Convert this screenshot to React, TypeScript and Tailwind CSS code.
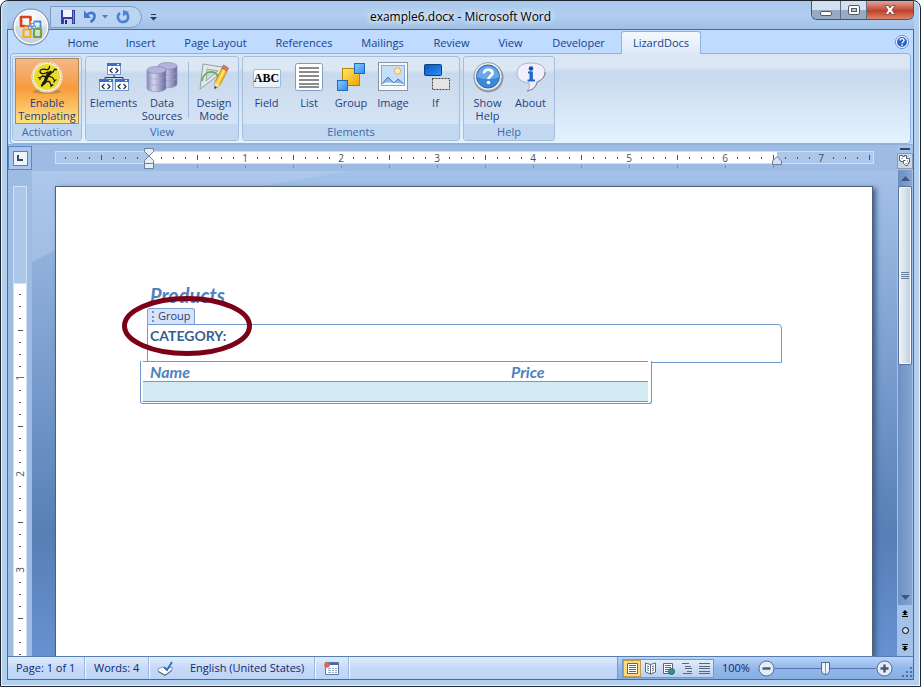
import type { ReactNode } from "react";
import clsx from "clsx";

const TABS = [
  { name: "Home", width: "w-[58px]" },
  { name: "Insert", width: "w-[57px]" },
  { name: "Page Layout", width: "w-[93px]" },
  { name: "References", width: "w-[84px]" },
  { name: "Mailings", width: "w-[73px]" },
  { name: "Review", width: "w-[65px]" },
  { name: "View", width: "w-[53px]" },
  { name: "Developer", width: "w-[83px]" },
];

const range = (from: number, to: number) =>
  Array.from({ length: to - from + 1 }, (_, i) => from + i);

/* ---------- icons ---------- */

const OfficeLogo = () => (
  <svg viewBox="0 0 38 38" className="size-[38px]">
    <defs>
      <radialGradient id="orb" cx="50%" cy="30%" r="70%">
        <stop offset="0" stopColor="#ffffff" />
        <stop offset="0.6" stopColor="#e3e8f0" />
        <stop offset="1" stopColor="#b4bfd0" />
      </radialGradient>
    </defs>
    <circle cx="19" cy="19" r="18" fill="url(#orb)" stroke="#7585a0" />
    <path d="M2.500 19a16.500 16.500 0 0 0 33 0c-8-3-25-3-33 0Z" fill="#c9d1de" opacity=".55" />
    <circle cx="19" cy="19" r="16.500" fill="none" stroke="#fff" strokeWidth="1.200" />
    <g fill="none" strokeLinejoin="round">
      <path d="M13 18H9V9h9.500v4" stroke="#d8421c" strokeWidth="2.600" />
      <path d="M12.500 18H18v-5" stroke="#ee7c1c" strokeWidth="2.200" />
      <path d="M22 13.500h6.500v6.500" stroke="#3f8bd8" strokeWidth="1.800" />
      <path d="M22 13v3.500M25 20h3.500" stroke="#6aaee9" strokeWidth="1.800" />
      <path d="M18.500 21.500h-7v7.500h7z" stroke="#f4ac1c" strokeWidth="2.200" />
      <path d="M22 21h7v8h-7z" stroke="#6ba83a" strokeWidth="2.200" />
      <path d="M19 15.500h3v3h-3zM16.500 18.500h3v3h-3zM20.500 18h3v3h-3z" stroke="#5d9be0" />
    </g>
  </svg>
);

const LizardIcon = () => (
  <svg viewBox="0 0 32 32" className="size-8">
    <ellipse cx="16" cy="29.500" rx="14" ry="2.500" fill="#a88346" opacity=".7" />
    <circle cx="16" cy="15" r="15.500" fill="#fbf5dc" />
    <circle cx="16" cy="15" r="14.500" fill="none" stroke="#b9ab74" strokeWidth=".8" strokeDasharray="2 1" />
    <circle cx="16" cy="15" r="13" fill="#e9dc2c" />
    <g fill="none" stroke="#1c1a08" strokeLinecap="round" strokeLinejoin="round">
      <path d="M17 10c-3 2.500-8 2-8-.5S13 7 15 7.500c2.500.5 3.500-1 3.500-3" strokeWidth="1.300" />
      <path d="M19.500 10.500c-2.500 2-4 4-4.500 6.500s-1 3-2 4" strokeWidth="3.200" />
      <path d="M12.500 21l-1.500 2.500" strokeWidth="2.400" />
      <path d="M19.500 10.500l2.500-.5 1.500-2.500M23.500 7.500l2 0" strokeWidth="1.300" />
      <path d="M17.500 14l4 1.500 2 3M23.500 18.500l1.500-.5M23.500 18.500l-.5 1.500" strokeWidth="1.300" />
      <path d="M15.500 15l-4-1-2.500 2M9 16l-1.500-.5M9 16l0 1.500" strokeWidth="1.300" />
      <path d="M14.500 19.500l4 0 1.500 3.500M20 23l2 0M20 23l0 1.500" strokeWidth="1.300" />
    </g>
  </svg>
);

const ElementsIcon = () => (
  <svg viewBox="0 0 32 32" className="size-8">
    <path d="M16 13v3M7 18v-2.500h18V18" fill="none" stroke="#1d3767" />
    {[
      [9, 1],
      [1, 17],
      [17, 17],
    ].map(([x, y]) => (
      <g key={`${x}-${y}`} transform={`translate(${x} ${y})`}>
        <rect x=".5" y=".5" width="13" height="11" fill="#fff" stroke="#7793c4" />
        <path d="M0 0h14v3H0z" fill="#3a6fcb" />
        <path d="M10 1h2v1h-2z" fill="#fff" />
        <path d="M5.500 5 3 7.500 5.500 10M8.500 5 11 7.500 8.500 10" fill="none" stroke="#15305f" strokeWidth="1.200" />
      </g>
    ))}
  </svg>
);

const DataIcon = () => (
  <svg viewBox="0 0 32 32" className="size-8">
    <defs>
      <linearGradient id="drum">
        <stop offset="0" stopColor="#8587b7" />
        <stop offset=".35" stopColor="#d4d4ef" />
        <stop offset="1" stopColor="#66689f" />
      </linearGradient>
    </defs>
    {[
      [12, 0],
      [1, 4],
    ].map(([x, y]) => (
      <g key={x} transform={`translate(${x} ${y})`}>
        <path d="M0 4v18c0 5 19 5 19 0V4" fill="url(#drum)" stroke="#8c8dba" strokeWidth=".6" />
        <ellipse cx="9.500" cy="4" rx="9.500" ry="3.500" fill="#b3b3db" stroke="#8183b3" strokeWidth=".6" />
        <path d="M0 10c1 4 18 4 19 0M0 16c1 4 18 4 19 0" fill="none" stroke="#9a9bc8" strokeWidth=".6" />
      </g>
    ))}
  </svg>
);

const DesignIcon = () => (
  <svg viewBox="0 0 32 32" className="size-8">
    <path d="M5 2 30 6 2 27Z" fill="#e4e8e6" stroke="#7f8a92" strokeWidth=".8" />
    <path d="M9 7 20 9 8 19Z" fill="#c8d6e3" stroke="#8e989f" strokeWidth=".8" />
    <path d="M4 19C6 8 17 7 21 16" fill="none" stroke="#58ad45" strokeWidth="1.600" />
    <path d="m17 20 7-14 5 3-7 14-5 4z" fill="#f9c32c" stroke="#b27c16" strokeWidth=".8" />
    <path d="m19.500 21.500 7-14" stroke="#ffec93" strokeWidth="1.500" />
    <path d="m24 6 1.500-3 5 3-1.500 3z" fill="#df7767" stroke="#a94e48" strokeWidth=".6" />
    <path d="m17 20 5 3-5.500 4z" fill="#f4dcb2" />
    <path d="m16.500 24 2.500 1.300-2.500 1.700z" fill="#343434" />
  </svg>
);

const FieldIcon = () => (
  <span className="flex h-8 w-8 items-center justify-center">
    <span className="flex h-[19px] w-7 shrink-0 items-center justify-center rounded-xs border border-[#a5b8d6] bg-linear-to-b from-white to-[#e6eefa] font-['Liberation_Serif',serif] text-xs font-bold text-black">
      ABC
    </span>
  </span>
);

const ListIcon = () => (
  <svg viewBox="0 0 32 32" className="size-8">
    <rect x="2.500" y="1.500" width="27" height="27" rx="2" fill="#fff" stroke="#7f9cc8" />
    <path d="M6 6h20M6 10h20M6 14h20M6 18h20M6 22h20M6 25h20" stroke="#8b8b8b" strokeWidth="2" />
  </svg>
);

const GroupIcon = () => (
  <svg viewBox="0 0 32 32" className="size-8">
    <defs>
      <linearGradient id="gold" x2="1" y2="1">
        <stop offset="0" stopColor="#ffe869" />
        <stop offset="1" stopColor="#eda500" />
      </linearGradient>
      <linearGradient id="azure" x2="1" y2="1">
        <stop offset="0" stopColor="#8ccbff" />
        <stop offset="1" stopColor="#2d8df0" />
      </linearGradient>
    </defs>
    <rect x="7.500" y="6.500" width="17" height="17" fill="url(#gold)" stroke="#b58305" />
    <rect x="19.500" y="1.500" width="10" height="10" fill="url(#azure)" stroke="#1f69bd" />
    <rect x="2.500" y="18.500" width="10" height="10" fill="url(#azure)" stroke="#1f69bd" />
  </svg>
);

const ImageIcon = () => (
  <svg viewBox="0 0 32 32" className="size-8">
    <rect x="1.500" y=".5" width="29" height="28" fill="#f7f9fb" stroke="#8796ab" />
    <rect x="4.500" y="3.500" width="23" height="20" fill="#c3e0fa" stroke="#84a9d4" />
    <circle cx="20.500" cy="9" r="3.200" fill="#ffe9ba" stroke="#f0ae59" />
    <path d="m5 22 6-7 5 5 3 3H5zM15 23l6-6 6 6z" fill="#8db6e8" />
    <path d="m5 22 6-7 6 6M16 22l5-5 6 5" fill="none" stroke="#4b76b8" />
    <path d="M5 22c5-3 14-1 22 0v1H5z" fill="#eef6ff" />
  </svg>
);

const IfIcon = () => (
  <svg viewBox="0 0 32 32" className="size-8">
    <defs>
      <linearGradient id="deep" x2="1" y2="1">
        <stop offset="0" stopColor="#0a55bf" />
        <stop offset="1" stopColor="#2b93f5" />
      </linearGradient>
    </defs>
    <rect x="4.500" y="2.500" width="17" height="11" rx="1" fill="url(#deep)" stroke="#103e83" />
    <rect x="12.500" y="16.500" width="17" height="11" fill="#e4e4e4" stroke="#444" strokeDasharray="2 1" />
  </svg>
);

const HelpIcon = () => (
  <svg viewBox="0 0 32 32" className="size-8">
    <circle cx="16.500" cy="15.500" r="15" fill="#8f98a3" />
    <circle cx="16" cy="14.500" r="14" fill="#e9edf1" stroke="#8a97a6" strokeWidth=".8" />
    <circle cx="16" cy="14.500" r="11.500" fill="#3c86d9" stroke="#366aab" />
    <path d="M5 15a11 11 0 0 1 22 0c-7 3-15 3-22 0Z" fill="#68a6e8" />
    <path d="M12 11.500c0-5 8.500-5 8.500-.5 0 3-4 3-4 6" fill="none" stroke="#fff" strokeWidth="2.800" />
    <circle cx="16.500" cy="20.500" r="1.800" fill="#fff" />
  </svg>
);

const AboutIcon = () => (
  <svg viewBox="0 0 32 32" className="size-8">
    <path d="M16 1C7 1 2 5 2 11c0 6 4 9 12 10 1 4 0 6-2 8 6-1 9-4 10-9 5-2 8-5 8-10C30 4 24 1 16 1Z" fill="#f2effd" stroke="#b0aed0" />
    <path d="M22 20c5-2 8-5 8-10M12 29c6-1 9-4 10-9" fill="none" stroke="#7f7d9e" />
    <circle cx="16" cy="6.500" r="2.300" fill="#174fae" />
    <path d="M13 10.500h4M12.500 18.500h7.500" fill="none" stroke="#1d69cc" strokeWidth="2" />
    <path d="M16.200 9.500v9" stroke="#1d69cc" strokeWidth="3.400" />
  </svg>
);

/* ---------- title bar ---------- */

const QuickAccess = () => (
  <div className="flex h-[22px] items-center rounded-r-full border border-[#7f9ac0] bg-[#c0d8f5]/70 pr-2.5 pl-2.5">
    <button aria-label="Save" className="mr-2">
      <svg viewBox="0 0 14 14" className="size-3.5">
        <path d="M0 0h14v14H0z" fill="#3b3f9c" />
        <path d="M2 0h9v7H2z" fill="#edf3ff" />
        <path d="M3 9h8v5H3z" fill="#c9cff0" />
        <path d="M4 10h2v4H4z" fill="#272a6c" />
        <path d="M12 1h1v12h-1z" fill="#7f86d8" />
      </svg>
    </button>
    <button aria-label="Undo">
      <svg viewBox="0 0 16 16" className="size-4">
        <path d="M4 6c4-4 8-2 7.500 2-.5 3-2 4-4 5" fill="none" stroke="#4576cb" strokeWidth="2.600" />
        <path d="M1 1.500v7.500h7z" fill="#4576cb" />
      </svg>
    </button>
    <button aria-label="Undo history" className="mx-[3px]">
      <svg viewBox="0 0 6 4" className="h-1 w-1.5">
        <path d="M0 0h6L3 3.500z" fill="#5c7cab" />
      </svg>
    </button>
    <button aria-label="Repeat" className="ml-1">
      <svg viewBox="0 0 16 16" className="size-4">
        <path d="M5 4c-4 3-2 9 3 9 5.500 0 6.500-6 3.500-8.500" fill="none" stroke="#4a80d5" strokeWidth="2.500" />
        <path d="M8 1v6.500L14 3z" fill="#4a80d5" />
      </svg>
    </button>
  </div>
);

const TitleBar = () => (
  <header className="flex h-7 shrink-0 items-start justify-between bg-linear-to-b from-[#a9c9ec] via-[#b1cef0] to-[#9fbfe4]">
    <div className="flex w-1/4 items-center gap-2 pt-[5px] pl-[43px]">
      <QuickAccess />
      <button aria-label="Customize Quick Access Toolbar">
        <svg viewBox="0 0 7 7" className="size-[7px]">
          <path d="M1 0h5v1H1zM0 3h7L3.500 6.500z" fill="#283a58" />
        </svg>
      </button>
    </div>
    <h1 className="px-2 pt-2 text-[12px] leading-4 text-black [text-shadow:0_0_6px_#fff,0_0_8px_#fff]">
      example6.docx - Microsoft Word
    </h1>
    <div className="flex w-1/4 justify-end">
      <div className="flex h-[19px] overflow-hidden rounded-b-md border border-t-0 border-[#46536b]">
        <button aria-label="Minimize" className="flex w-7 items-center justify-center bg-linear-to-b from-[#d4e0ee] from-50% to-[#97aac5] to-50%">
          <span className="mt-1.5 h-[5px] w-3 rounded-xs border border-[#4f596a] bg-white" />
        </button>
        <button aria-label="Restore" className="flex w-[27px] items-center justify-center border-x border-[#5e6c84] bg-linear-to-b from-[#d4e0ee] from-50% to-[#97aac5] to-50%">
          <span className="flex h-2.5 w-3 items-center justify-center rounded-xs border border-[#4f596a] bg-white">
            <span className="h-1 w-1.5 border border-[#4f596a] bg-[#b8c6d9]" />
          </span>
        </button>
        <button aria-label="Close" className="flex w-[46px] items-center justify-center bg-linear-to-b from-[#e1a398] from-0% via-[#bf4028] via-55% to-[#dc8565]">
          <svg viewBox="0 0 12 10" className="h-2.5 w-3">
            <path d="M1 .5h3L6 3 8 .5h3L8 5l3 4.500H8L6 7 4 9.500H1L4 5z" fill="#fff" stroke="#6d3434" strokeWidth=".7" />
          </svg>
        </button>
      </div>
    </div>
  </header>
);

/* ---------- ribbon ---------- */

const RibbonGroup = ({ label, children }: { label: string; children: ReactNode }) => (
  <section className="flex h-[85px] flex-col overflow-hidden rounded-[3px] border border-[#a3bedf] bg-linear-to-b from-[#dce7f4] from-15% via-[#c9d9ed] via-20% to-[#d9e7f6]">
    <div className="flex flex-1 px-0.5 pt-px">{children}</div>
    <h2 className="h-4 bg-[#c1d8f0] text-center text-[11px] leading-4 text-[#3e6aaa]">{label}</h2>
  </section>
);

type RibbonButtonProps = { icon: ReactNode; lines: string[]; width: string; active?: boolean };

const RibbonButton = ({ icon, lines, width, active }: RibbonButtonProps) => (
  <button
    aria-pressed={active}
    className={clsx(
      "flex h-[66px] flex-col items-center pt-1 text-[11px] leading-[13px] whitespace-nowrap text-[#1f3f80]",
      width,
      active &&
        "bg-linear-to-b from-[#f3b88a] from-0% via-[#f79b3a] via-45% to-[#fde483] shadow-[inset_0_0_0_1px_#a98a58]",
    )}
  >
    {icon}
    <span className="mt-0.5">
      {lines.map((line) => (
        <span key={line} className="block">
          {line}
        </span>
      ))}
    </span>
  </button>
);

const Ribbon = () => (
  <div className="shrink-0 bg-[#bfdbff]">
    <nav className="flex h-[23px] items-end pl-[46px]">
      {TABS.map((tab) => (
        <button key={tab.name} className={clsx("h-5 text-[11px] whitespace-nowrap text-[#15428b]", tab.width)}>
          {tab.name}
        </button>
      ))}
      <button className="relative top-px ml-px h-[23px] w-20 rounded-t-[3px] border border-b-0 border-[#8db2e3] bg-linear-to-b from-[#f4f9fe] to-[#dfe9f5] text-[11px] text-[#15428b]">
        LizardDocs
      </button>
      <button aria-label="Help" className="mr-1 mb-1 ml-auto">
        <svg viewBox="0 0 14 14" className="size-3.5">
          <circle cx="7" cy="7" r="6.500" fill="#fff" stroke="#628bcb" />
          <circle cx="7" cy="7" r="5" fill="#2563c9" />
          <path d="M5 5.500c0-2.500 4-2.500 4 0C9 7 7 7 7 8.500" fill="none" stroke="#fff" strokeWidth="1.400" />
          <path d="M6.300 9.500h1.500V11H6.300z" fill="#fff" />
        </svg>
      </button>
    </nav>
    <div className="mx-0.5 flex h-[91px] gap-[3px] rounded-sm border border-[#8db2e3] bg-linear-to-b from-[#dbe6f4] from-15% via-[#c8d8ed] via-20% to-[#e3f3fe] px-px pt-0.5">
      <RibbonGroup label="Activation">
        <RibbonButton icon={<LizardIcon />} lines={["Enable", "Templating"]} width="w-16" active />
      </RibbonGroup>
      <RibbonGroup label="View">
        <RibbonButton icon={<ElementsIcon />} lines={["Elements"]} width="w-[51px]" />
        <RibbonButton icon={<DataIcon />} lines={["Data", "Sources"]} width="w-[46px]" />
        <span className="mx-[3px] mt-1 h-14 w-px border-l border-[#a5bddb] bg-white" />
        <RibbonButton icon={<DesignIcon />} lines={["Design", "Mode"]} width="w-11" />
      </RibbonGroup>
      <RibbonGroup label="Elements">
        <RibbonButton icon={<FieldIcon />} lines={["Field"]} width="w-[43px]" />
        <RibbonButton icon={<ListIcon />} lines={["List"]} width="w-[42px]" />
        <RibbonButton icon={<GroupIcon />} lines={["Group"]} width="w-[42px]" />
        <RibbonButton icon={<ImageIcon />} lines={["Image"]} width="w-[42px]" />
        <RibbonButton icon={<IfIcon />} lines={["If"]} width="w-[43px]" />
      </RibbonGroup>
      <RibbonGroup label="Help">
        <RibbonButton icon={<HelpIcon />} lines={["Show", "Help"]} width="w-[43px]" />
        <RibbonButton icon={<AboutIcon />} lines={["About"]} width="w-[43px]" />
      </RibbonGroup>
    </div>
    <div className="h-px bg-[#8fb0d6]" />
  </div>
);

/* ---------- rulers ---------- */

// one mark every eighth of an inch, a long one at the half, a number at the inch
const Mark = ({ eighth, vertical }: { eighth: number; vertical?: boolean }) => {
  const step = Math.abs(eighth) % 8;
  return (
    <span className={clsx("flex shrink-0 items-center justify-center text-[10px] leading-3 text-[#444f5e]", vertical ? "h-3 w-full" : "h-full w-3")}>
      {step === 0 ? (
        <span className={clsx(vertical && "-rotate-90")}>{eighth / 8}</span>
      ) : (
        <span className={clsx("bg-[#4a5361]", vertical ? "h-px" : "w-px", vertical ? (step === 4 ? "w-[5px]" : "w-0.5") : step === 4 ? "h-[5px]" : "h-0.5")} />
      )}
    </span>
  );
};

const HorizontalRuler = () => (
  <div className="relative h-[26px] shrink-0 bg-[#9dbbe3] px-[23px] pt-1.5">
    <div className="flex h-[13px] border border-[#cfdff5] bg-[#acc7ea]">
      <div className="flex w-[93px] shrink-0 justify-end overflow-hidden pr-1.5">
        {range(-7, -1).map((n) => (
          <Mark key={n} eighth={n} />
        ))}
      </div>
      <div className="flex w-[628px] shrink-0 overflow-hidden bg-white pl-1.5">
        {range(1, 52).map((n) => (
          <Mark key={n} eighth={n} />
        ))}
      </div>
      <div className="flex flex-1 overflow-hidden pl-0.5">
        {range(53, 60).map((n) => (
          <Mark key={n} eighth={n} />
        ))}
      </div>
    </div>
    <div className="flex overflow-hidden pt-px pl-[142px]">
      {range(1, 13).map((n) => (
        <span key={n} className="h-[3px] w-12 shrink-0 border-l border-[#7790b8]" />
      ))}
    </div>
    <svg viewBox="0 0 10 22" className="absolute top-[3px] left-28 h-[22px] w-2.5">
      <path d="M.5.5h9v3L5 8 9.500 12.500v3h-9v-3L5 8 .5 3.500zM.5 15.500h9v5h-9z" fill="#e8eef8" stroke="#6b7f9f" />
    </svg>
    <svg viewBox="0 0 10 9" className="absolute top-[11px] left-[740px] h-[9px] w-2.5">
      <path d="M.5 8.500V5L5 .5 9.500 5v3.500z" fill="#d5e0f1" stroke="#6b7f9f" />
    </svg>
  </div>
);

const VerticalRuler = () => (
  <div className="flex w-6 shrink-0 flex-col bg-[#9dbbe3]">
    <button aria-label="Tab selector" className="mt-px flex size-6 shrink-0 items-center justify-center border border-[#5c85c5] bg-[#a9c5ec]">
      <span className="flex size-[15px] items-center justify-center border border-[#557fbe] bg-[#eef4fc]">
        <span className="size-1.5 border-b-2 border-l-2 border-[#3c4a63]" />
      </span>
    </button>
    <div className="mx-[5px] mt-4 h-[98px] shrink-0 border border-[#d1e1f6] bg-[#acc7ea]" />
    <div className="mx-[5px] flex-1 basis-0 overflow-hidden border-x border-[#d1e1f6] bg-white pt-1">
      {range(1, 31).map((n) => (
        <Mark key={n} eighth={n} vertical />
      ))}
    </div>
  </div>
);

/* ---------- document ---------- */

const Page = () => (
  <article className="relative min-h-full border border-b-0 border-[#55606e] bg-white pt-[98px] pr-[90px] pl-[84px] font-['Lato',sans-serif] text-[#4f81bd] shadow-[3px_2px_5px_#3d5f92]">
    <h2 className="pl-2.5 text-[20px] leading-5 font-bold italic">Products</h2>
    <div className="mt-[3px] ml-[7px] flex h-4 w-12 items-center gap-1 rounded-t-[3px] border border-b-0 border-[#7f9fd4] bg-[#d6e3fa] pl-1 font-['Open_Sans',sans-serif] text-[11px] text-[#2b4270]">
      <span className="h-[11px] border-l-2 border-dotted border-[#6f93d2]" />
      Group
    </div>
    <div className="ml-[7px] h-[39px] rounded-tr-[4px] border border-[#6f98cc] pl-0.5">
      <h3 className="text-[14px] leading-[22px] font-bold text-[#365f91]">CATEGORY:</h3>
    </div>
    <div className="relative -mt-0.5 w-[512px] rounded-b-[3px] border border-t-0 border-[#6f98cc] bg-white pr-[3px] pb-px pl-0.5">
      <table className="w-full table-fixed text-left text-[16px] leading-[19px] italic">
        <thead>
          <tr>
            <th className="w-[361px] border-y border-[#4bacc6] pl-[7px] font-bold">Name</th>
            <th className="border-y border-[#4bacc6] pl-[7px] font-bold">Price</th>
          </tr>
        </thead>
        <tbody>
          <tr className="h-5 bg-[#d2eaf1]">
            <td className="border-b border-[#4bacc6]" />
            <td className="border-b border-[#4bacc6]" />
          </tr>
        </tbody>
      </table>
    </div>
    <svg viewBox="0 0 132 62" className="absolute top-[108px] left-[65px] h-[62px] w-[132px]">
      <ellipse cx="66" cy="31" rx="62.500" ry="27.500" fill="none" stroke="#7b0018" strokeWidth="5" />
    </svg>
  </article>
);

const ScrollBar = () => (
  <div className="flex w-4 shrink-0 flex-col items-center bg-[#a3c2ea]">
    <div className="mt-[3px] h-0.5 w-2.5 shrink-0 bg-[#34445f]" />
    <button aria-label="View Ruler" className="mt-[3px] flex size-4 shrink-0 items-center justify-center border border-[#8b9ab0] bg-[#ccd5e2]">
      <svg viewBox="0 0 12 12" className="size-3">
        <path d="M.5.5h3v1h2v-1h2v3h3v4h-1l-1 3h-2l-2-2v-2h-3v-1h-1z" fill="#fff" stroke="#54617a" />
        <path d="M2.500 3.500h1M4.500 6.500v-1h2M8.500 5.500v1M6.500 8.500h1" fill="none" stroke="#54617a" />
      </svg>
    </button>
    <div className="mt-px flex min-h-0 w-3.5 flex-1 flex-col bg-linear-to-r from-[#6d8fc1] to-[#86a5d2]">
      <button aria-label="Scroll up" className="flex h-4 shrink-0 items-center justify-center">
        <svg viewBox="0 0 9 5" className="h-[5px] w-[9px]">
          <path d="M4.500 0 9 5H0z" fill="#41587f" />
        </svg>
      </button>
      <div className="flex h-[179px] shrink flex-col items-center justify-center gap-px rounded-xs border border-[#56729e] bg-linear-to-r from-[#eef2f6] via-[#dbe4ec] via-45% to-[#b8cde2] shadow-[inset_0_0_0_1px_#f4f8fd]">
        {range(1, 4).map((n) => (
          <span key={n} className="h-px w-2 bg-[#6a7f9f]" />
        ))}
      </div>
      <button aria-label="Scroll down" className="mt-auto flex h-4 shrink-0 items-center justify-center">
        <svg viewBox="0 0 9 5" className="h-[5px] w-[9px]">
          <path d="M0 0h9L4.500 5z" fill="#3c5480" />
        </svg>
      </button>
    </div>
    <div className="flex h-[51px] shrink-0 flex-col items-center justify-around">
      <button aria-label="Previous page">
        <svg viewBox="0 0 6 7" className="h-[7px] w-1.5">
          <path d="m3 0 3 3H4v1l2 1H0l2-1V3H0zM0 6h6v1H0z" />
        </svg>
      </button>
      <button aria-label="Select browse object">
        <span className="block size-[7px] rounded-full border border-black bg-[#d5dbe4]" />
      </button>
      <button aria-label="Next page">
        <svg viewBox="0 0 6 7" className="h-[7px] w-1.5">
          <path d="M0 0h6v1H0zM0 2h6L4 3v1h2L3 7 0 4h2V3z" />
        </svg>
      </button>
    </div>
  </div>
);

const Workspace = () => (
  <div className="flex min-h-0 flex-1 bg-[#9dbbe3]">
    <VerticalRuler />
    <main className="flex min-w-0 flex-1 flex-col">
      <HorizontalRuler />
      <div className="relative min-h-0 flex-1 overflow-hidden bg-linear-to-b from-[#a4c1e8] from-0% via-[#577fb6] via-75% to-[#6792d0] pt-[15px] pr-6 pl-[23px]">
        <svg viewBox="0 0 864 487" preserveAspectRatio="none" className="absolute inset-0 size-full">
          <path d="M0 0h318C200 18 80 45 0 92z" fill="#b9d3f1" opacity=".4" />
        </svg>
        <Page />
      </div>
    </main>
    <ScrollBar />
  </div>
);

/* ---------- status bar ---------- */

const VIEWS = [
  { name: "Print Layout", d: "M1.500 1.500h10v10h-10zM3 3.500h7M3 5.500h7M3 7.500h7M3 9.500h7" },
  { name: "Full Screen Reading", d: "M6.500 2.500 1.500 1v9l5 2 5-2V1zV12M3 4l2 .5M3 6l2 .5M3 8l2 .5M8 4.500l2-.5M8 6.500l2-.5M8 8.500l2-.5" },
  { name: "Web Layout", d: "M1.500 1.500h9v10h-9zM3 3.500h6M3 5.500h6M3 7.500h4M3 9.500h3" },
  { name: "Outline", d: "M2 1.500h7M5 4.500h6M5 6.500h7M7 9.500h5M3 11.500h9" },
  { name: "Draft", d: "M1 1.500h11M1 4.500h11M1 6.500h11M1 9.500h11M1 11.500h11" },
];

const StatusItem = ({ children, className }: { children: ReactNode; className?: string }) => (
  <div className={clsx("flex h-full items-center border-r border-[#9bb7de] shadow-[1px_0_0_#eef5fe]", className)}>
    {children}
  </div>
);

const StatusBar = () => (
  <footer className="flex h-[23px] shrink-0 items-center border-t border-[#567db1] bg-linear-to-b from-[#e0ecfb] via-[#c5dafa] to-[#bcd4f4] text-[11px] whitespace-nowrap text-[#15286b]">
    <StatusItem className="w-[77px] pl-2">Page: 1 of 1</StatusItem>
    <StatusItem className="w-16 pl-[9px]">Words: 4</StatusItem>
    <StatusItem className="w-[166px] gap-4 pl-2">
      <svg viewBox="0 0 17 15" className="h-[15px] w-[17px] shrink-0">
        <path d="m1 8 5-2 3 2 6-2v3l-7 5-7-4z" fill="#fff" stroke="#8593ab" />
        <path d="m1 10.500 7 4 7-5" fill="none" stroke="#5a6780" />
        <path d="m7 6 3 3 5-8" fill="none" stroke="#3568bd" strokeWidth="1.800" />
      </svg>
      English (United States)
    </StatusItem>
    <StatusItem className="w-[34px] pl-[9px]">
      <svg viewBox="0 0 16 13" className="h-[13px] w-4">
        <path d="M1.500.5h13v12h-13z" fill="#fff" stroke="#5f75a3" />
        <path d="M2 1h12v2H2z" fill="#4069b7" />
        <path d="M4 6.500h3M8 6.500h2M11 6.500h2M4 8.500h3M8 8.500h2M11 8.500h2M4 10.500h3M8 10.500h2M11 10.500h2" stroke="#9aaac6" />
        <circle cx="3" cy="3" r="2.800" fill="#e0664e" />
      </svg>
    </StatusItem>
    <div className="ml-auto flex h-full items-center border-l border-[#7799cf] bg-linear-to-b from-[#bbd4f7] via-[#92b7ec] to-[#88aee3] pl-1">
      <div className="flex border border-[#7799ca] bg-linear-to-b from-[#e3edfa] to-[#b8d0f1]">
        {VIEWS.map((view, i) => (
          <button
            key={view.name}
            aria-label={view.name}
            className={clsx("flex h-[17px] w-[18px] items-center justify-center", i === 0 && "bg-[#fbdc7c] shadow-[inset_0_0_0_1px_#c59a4c]")}
          >
            <svg viewBox="0 0 13 13" className="size-[13px]">
              <path d={view.d} fill={i < 3 ? "#fff" : "none"} stroke="#5c6679" />
              {i === 2 && <circle cx="9.500" cy="9.500" r="3" fill="#3b8c8a" stroke="#286484" />}
            </svg>
          </button>
        ))}
      </div>
      <button className="ml-2 w-8 text-left">100%</button>
      <button aria-label="Zoom out" className="ml-1">
        <svg viewBox="0 0 17 17" className="size-[17px]">
          <circle cx="8.500" cy="8.500" r="7.500" fill="#e3edf9" stroke="#4f6995" />
          <path d="M4.500 8.500h8" stroke="#4a5670" strokeWidth="2.400" />
        </svg>
      </button>
      <input
        type="range"
        aria-label="Zoom"
        min={0}
        max={200}
        defaultValue={100}
        className="h-4 w-[101px] appearance-none bg-[linear-gradient(#5878ad,#5878ad)] bg-[length:100%_1px] bg-center bg-no-repeat [&::-webkit-slider-thumb]:h-[13px] [&::-webkit-slider-thumb]:w-[9px] [&::-webkit-slider-thumb]:appearance-none [&::-webkit-slider-thumb]:rounded-b-full [&::-webkit-slider-thumb]:border [&::-webkit-slider-thumb]:border-[#4f6995] [&::-webkit-slider-thumb]:bg-[linear-gradient(90deg,#eef4fc_40%,#7f95ba_40%,#7f95ba_60%,#eef4fc_60%)]"
      />
      <button aria-label="Zoom in">
        <svg viewBox="0 0 17 17" className="size-[17px]">
          <circle cx="8.500" cy="8.500" r="7.500" fill="#e3edf9" stroke="#4f6995" />
          <path d="M4.500 8.500h8M8.500 4.500v8" stroke="#4a5670" strokeWidth="2.400" />
        </svg>
      </button>
      <svg viewBox="0 0 12 12" className="mt-2 ml-2 size-3">
        <path d="M9 1h2v2H9zM5 5h2v2H5zM9 5h2v2H9zM1 9h2v2H1zM5 9h2v2H5zM9 9h2v2H9z" fill="#4e70a8" />
      </svg>
    </div>
  </footer>
);

const App = () => {
  return (
    <div className="relative flex h-screen flex-col overflow-hidden rounded-t-lg border border-[#20262f] bg-[#b4d0ef] px-1.5 pb-1.5 font-['Open_Sans',sans-serif] shadow-[inset_0_0_0_1px_#e6f2fe]">
      <TitleBar />
      <div className="flex min-h-0 flex-1 flex-col border border-[#50698c]">
        <Ribbon />
        <Workspace />
        <StatusBar />
      </div>
      <button aria-label="Office Button" className="absolute top-[7px] left-[11px]">
        <OfficeLogo />
      </button>
    </div>
  );
};

export default App;
